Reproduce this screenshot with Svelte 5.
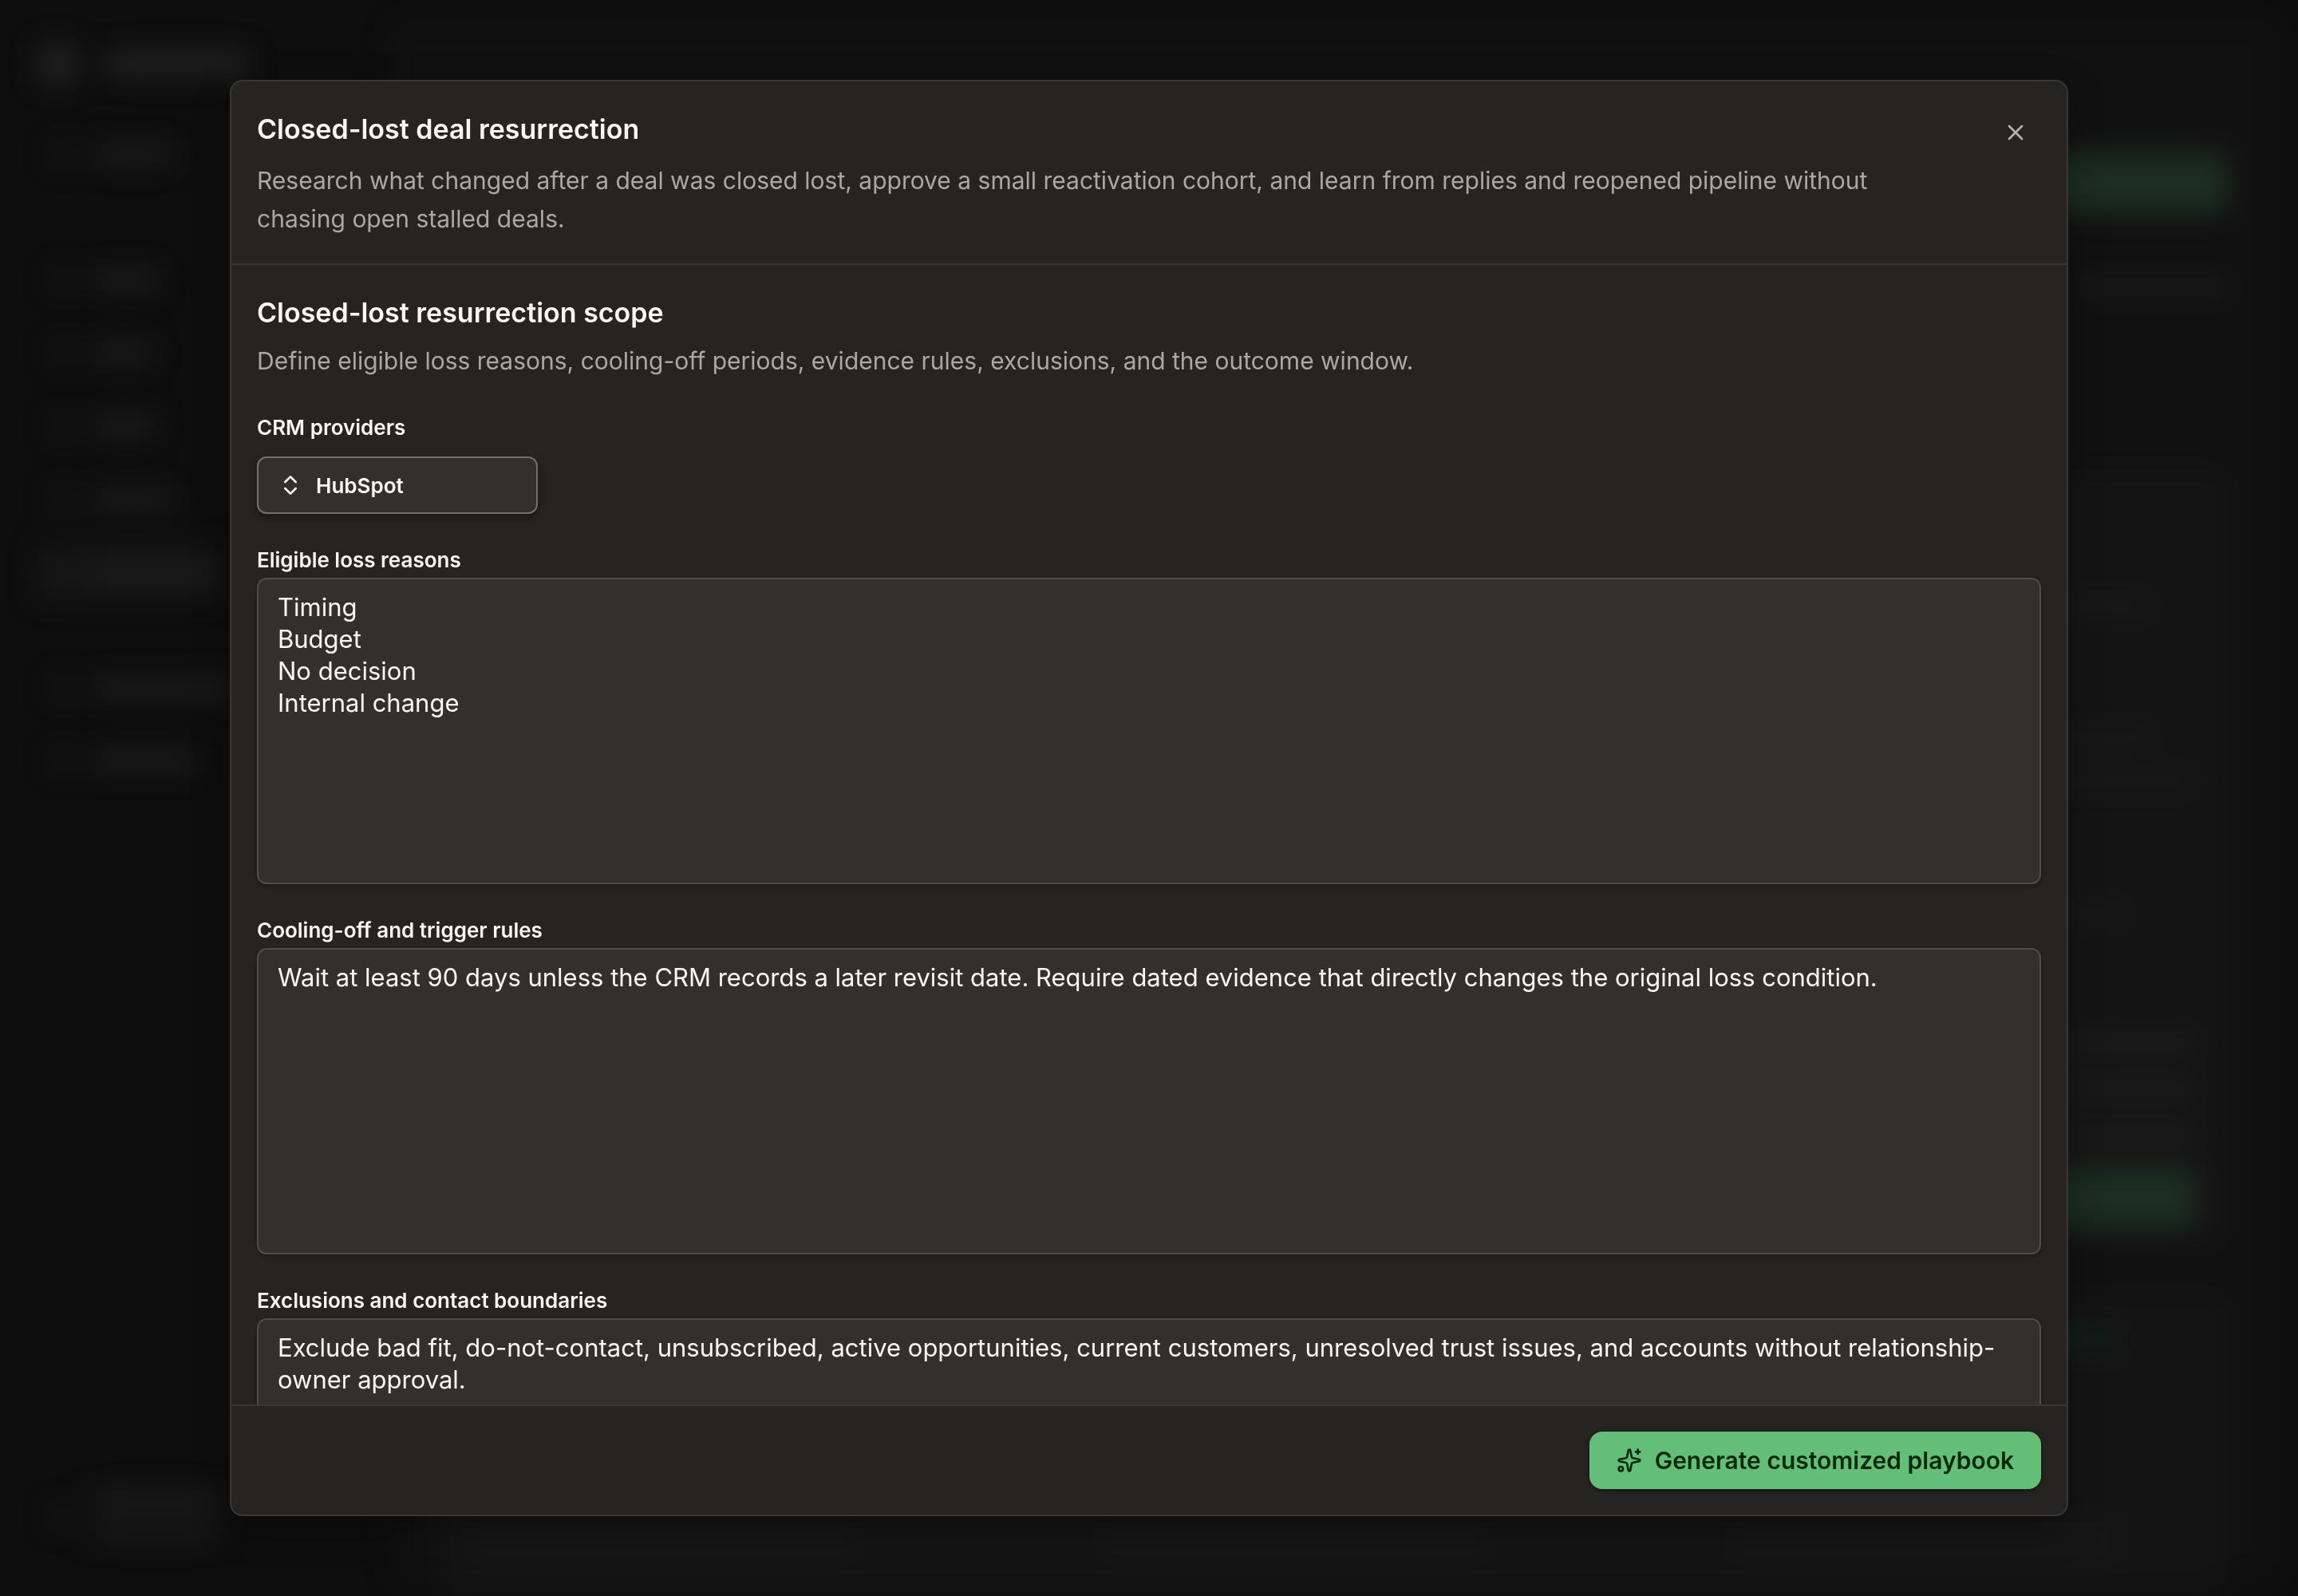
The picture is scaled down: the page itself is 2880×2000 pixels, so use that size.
<script lang="ts">
  const providers = ['HubSpot', 'Salesforce', 'Pipedrive'];
  let provider = 'HubSpot';

  let fields = [
    {
      id: 'loss-reasons',
      label: 'Eligible loss reasons',
      value: 'Timing\nBudget\nNo decision\nInternal change',
    },
    {
      id: 'trigger-rules',
      label: 'Cooling-off and trigger rules',
      value:
        'Wait at least 90 days unless the CRM records a later revisit date. Require dated evidence that directly changes the original loss condition.',
    },
    {
      id: 'exclusions',
      label: 'Exclusions and contact boundaries',
      value:
        'Exclude bad fit, do-not-contact, unsubscribed, active opportunities, current customers, unresolved trust issues, and accounts without relationship-owner approval.',
    },
  ];

  // widths of the dimmed bars behind the dialog
  const navGroups = [[100], [84, 76, 80, 100, 150], [190, 130]];
  const cardLines = [[345], [345, 400], [315], [400, 400, 400]];
</script>

<div class="page" aria-hidden="true">
  <div class="sidebar">
    <div class="brand"><i class="logo"></i><i class="bar brand-name"></i></div>
    {#each navGroups as group}
      <div class="nav-group">
        {#each group as width, i}
          <div class="nav-item" class:active={i === 4}>
            <i class="dot"></i>
            <i class="bar" style="width: {width}px"></i>
          </div>
        {/each}
      </div>
    {/each}
    <div class="account">
      <i class="dot"></i>
      <div class="account-text"><i class="bar"></i><i class="bar dim"></i></div>
    </div>
  </div>
  <div class="main">
    <i class="cta"></i>
    <i class="bar dim tabs"></i>
    <div class="cards">
      <div class="card tall">
        {#each cardLines as lines}
          <div class="lines">
            {#each lines as width}
              <i class="bar" class:dim={lines.length < 3} style="width: {width}px"></i>
            {/each}
          </div>
        {/each}
        <i class="cta"></i>
      </div>
      <div class="card low">
        <i class="bar teal"></i>
        <div class="row"><i class="bar dim"></i><i class="bar dim"></i><i class="bar dim"></i></div>
      </div>
    </div>
  </div>
</div>

<div class="overlay">
  <div class="modal" role="dialog" aria-modal="true" aria-labelledby="modal-title">
    <header class="modal__header">
      <div class="modal__heading">
        <h1 id="modal-title">Closed-lost deal resurrection</h1>
        <p>
          Research what changed after a deal was closed lost, approve a small reactivation cohort, and learn from replies
          and reopened pipeline without chasing open stalled deals.
        </p>
      </div>
      <button type="button" class="close" aria-label="Close">
        <svg class="icon" viewBox="0 0 24 24"><path d="M18 6 6 18M6 6l12 12" /></svg>
      </button>
    </header>

    <div class="modal__body">
      <h2>Closed-lost resurrection scope</h2>
      <p>Define eligible loss reasons, cooling-off periods, evidence rules, exclusions, and the outcome window.</p>

      <div class="providers">
        <label for="provider">CRM providers</label>
        <div class="select">
          <svg class="icon" viewBox="0 0 24 24"><path d="m7 15 5 5 5-5M7 9l5-5 5 5" /></svg>
          <select id="provider" bind:value={provider}>
            {#each providers as name}
              <option>{name}</option>
            {/each}
          </select>
        </div>
      </div>

      {#each fields as field (field.id)}
        <div class="field">
          <label for={field.id}>{field.label}</label>
          <textarea id={field.id} bind:value={field.value} spellcheck="false"></textarea>
        </div>
      {/each}
    </div>

    <footer class="modal__footer">
      <button type="button" class="primary">
        <svg class="icon" viewBox="0 0 24 24">
          <path
            d="M11.017 2.814a1 1 0 0 1 1.966 0l1.051 5.558a2 2 0 0 0 1.594 1.594l5.558 1.051a1 1 0 0 1 0 1.966l-5.558 1.051a2 2 0 0 0-1.594 1.594l-1.051 5.558a1 1 0 0 1-1.966 0l-1.051-5.558a2 2 0 0 0-1.594-1.594l-5.558-1.051a1 1 0 0 1 0-1.966l5.558-1.051a2 2 0 0 0 1.594-1.594z"
          />
          <path d="M20 2v4M22 4h-4" />
          <circle cx="4" cy="20" r="2" />
        </svg>
        Generate customized playbook
      </button>
    </footer>
  </div>
</div>

<style>
  :global(body) {
    margin: 0;
    background: #0e0e0e;
    font-family: Inter, 'Liberation Sans', sans-serif;
  }

  /* dimmed page behind the dialog */
  .page {
    display: flex;
    height: 100vh;
    overflow: hidden;
    filter: blur(16px);
  }

  .page i {
    display: block;
    flex: none;
  }

  .bar {
    height: 24px;
    border-radius: 8px;
    background: #1c1c1c;
  }

  .bar.dim {
    background: #191919;
  }

  .bar.teal {
    width: 260px;
    height: 32px;
    background: #10201c;
  }

  .sidebar {
    display: flex;
    flex-direction: column;
    box-sizing: border-box;
    width: 490px;
    padding: 48px 44px;
  }

  .brand {
    display: flex;
    align-items: center;
    gap: 32px;
    height: 64px;
    margin-bottom: 48px;
  }

  .logo {
    width: 56px;
    height: 56px;
    border-radius: 50%;
    background: #1f1f1f;
  }

  .brand-name {
    width: 180px;
    height: 30px;
    background: #212121;
  }

  .nav-group {
    display: flex;
    flex-direction: column;
    gap: 24px;
    margin-bottom: 76px;
  }

  .brand + .nav-group {
    margin-bottom: 88px;
  }

  .nav-item {
    display: flex;
    align-items: center;
    gap: 24px;
    box-sizing: border-box;
    width: 232px;
    height: 68px;
    padding: 0 20px;
    border-radius: 12px;
  }

  .nav-item.active {
    background: #151515;
  }

  .dot {
    width: 28px;
    height: 28px;
    border-radius: 50%;
    background: #171717;
  }

  .account {
    display: flex;
    align-items: center;
    gap: 24px;
    margin: auto 0 20px;
    padding: 0 20px;
  }

  .account-text {
    display: flex;
    flex-direction: column;
    gap: 16px;
    width: 160px;
  }

  .main {
    display: flex;
    flex: 1;
    flex-direction: column;
    align-items: flex-end;
    margin: 28px 28px 24px 0;
    padding: 162px 60px 0;
    border-radius: 24px;
    background: #111111;
  }

  .cta {
    width: 400px;
    height: 78px;
    border-radius: 16px;
    background: #1c2d21;
  }

  .tabs {
    width: 190px;
    margin: 80px 0 216px;
  }

  .cards {
    display: flex;
    flex-direction: column;
    gap: 64px;
    width: 100%;
  }

  .card {
    display: flex;
    flex-direction: column;
    align-items: flex-end;
    padding: 40px;
    border-radius: 24px;
    background: #141414;
  }

  .tall {
    gap: 140px;
    padding: 160px 40px 20px;
  }

  .lines {
    display: flex;
    flex-direction: column;
    gap: 32px;
    width: 400px;
  }

  .tall .cta {
    margin-top: -110px;
  }

  .low {
    gap: 200px;
    padding-right: 140px;
  }

  .row {
    display: flex;
    justify-content: space-between;
    width: 100%;
  }

  .row .bar {
    width: 480px;
    height: 64px;
    background: #161616;
  }

  .overlay {
    position: fixed;
    inset: 0;
    display: flex;
    align-items: center;
    justify-content: center;
  }

  .modal {
    display: flex;
    flex-direction: column;
    box-sizing: border-box;
    width: 80%;
    height: 90%;
    overflow: hidden;
    border: 2px solid #383735;
    border-radius: 16px;
    background: #252422;
    box-shadow: 0 16px 48px rgba(0, 0, 0, 0.3);
    color: #f7f6f4;
  }

  .modal__header {
    display: flex;
    align-items: flex-start;
    justify-content: space-between;
    gap: 96px;
    padding: 32px;
    border-bottom: 2px solid #383735;
  }

  h1,
  h2 {
    margin: 0;
    font-size: 34px;
    font-weight: 600;
    line-height: 56px;
  }

  p {
    margin: 8px 0 0;
    color: #aaa8a5;
    font-size: 30px;
    line-height: 48px;
  }

  .modal__header p {
    margin-top: 12px;
  }

  .icon {
    flex: none;
    width: 32px;
    height: 32px;
    fill: none;
    stroke: currentColor;
    stroke-width: 2;
    stroke-linecap: round;
    stroke-linejoin: round;
  }

  button,
  select,
  textarea {
    font-family: inherit;
  }

  .close {
    display: flex;
    flex: none;
    align-items: center;
    justify-content: center;
    width: 64px;
    height: 64px;
    padding: 0;
    border: 0;
    border-radius: 12px;
    background: none;
    color: #b4b2af;
  }

  .modal__body {
    flex: 1;
    min-height: 0;
    padding: 32px;
    overflow-y: auto;
    scrollbar-width: none;
  }

  label {
    font-size: 26px;
    font-weight: 600;
    line-height: 32px;
  }

  .providers {
    display: flex;
    flex-direction: column;
    align-items: flex-start;
    gap: 20px;
    margin-top: 44px;
  }

  .select {
    display: flex;
    align-items: center;
    gap: 16px;
    box-sizing: border-box;
    width: 352px;
    height: 72px;
    padding: 0 24px;
    border: 2px solid #71706d;
    border-radius: 12px;
    background: #31302e;
    box-shadow: 0 4px 10px rgba(0, 0, 0, 0.35);
  }

  select {
    flex: 1;
    min-width: 0;
    height: 100%;
    padding: 0;
    border: 0;
    outline: 0;
    appearance: none;
    background: none;
    color: inherit;
    font-size: 26px;
    font-weight: 600;
  }

  .field {
    display: flex;
    flex-direction: column;
    gap: 6px;
    margin-top: 42px;
  }

  textarea {
    box-sizing: border-box;
    width: 100%;
    height: 384px;
    padding: 15px 24px;
    border: 2px solid #4e4d4a;
    border-radius: 12px;
    outline: 0;
    resize: none;
    background: #31302e;
    box-shadow: 0 2px 4px rgba(0, 0, 0, 0.3);
    color: inherit;
    font-size: 31px;
    line-height: 40px;
  }

  .modal__footer {
    display: flex;
    justify-content: flex-end;
    padding: 32px;
    border-top: 2px solid #383735;
  }

  .primary {
    display: flex;
    align-items: center;
    gap: 16px;
    height: 72px;
    padding: 0 34px;
    border: 0;
    border-radius: 16px;
    background: #63bf78;
    box-shadow: 0 2px 6px rgba(0, 0, 0, 0.4);
    color: #06290e;
    font-size: 30px;
    font-weight: 600;
  }
</style>
